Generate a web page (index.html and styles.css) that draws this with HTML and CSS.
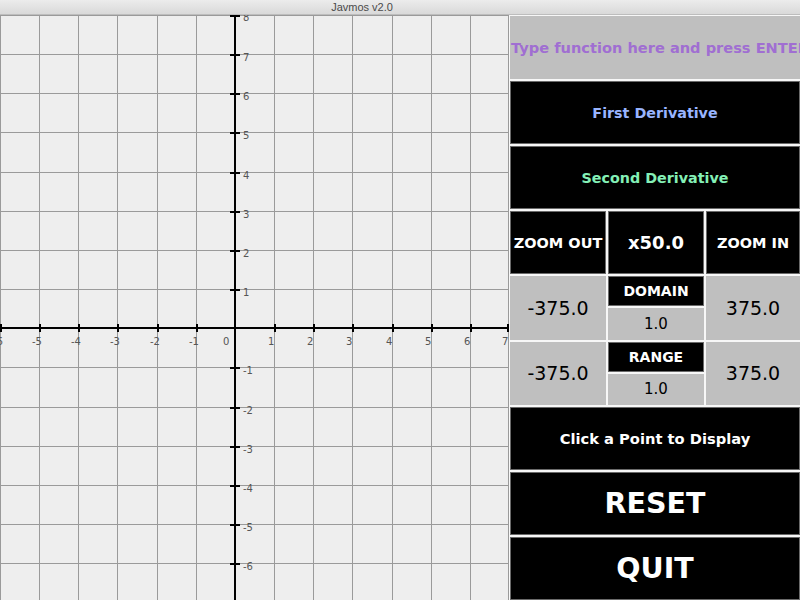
FILE: index.html
```html
<!DOCTYPE html>
<html>
<head>
<meta charset="utf-8">
<title>Javmos v2.0</title>
<link rel="stylesheet" href="styles.css">
</head>
<body>
<div class="window">
  <div class="titlebar"><span class="title">Javmos v2.0</span></div>
  <div class="main">
    <svg class="graph" width="509" height="585" viewBox="0 0 509 585" xmlns="http://www.w3.org/2000/svg">
      <g class="grid">
        <line x1="0.5" y1="0" x2="0.5" y2="585"/>
        <line x1="39.5" y1="0" x2="39.5" y2="585"/>
        <line x1="78.5" y1="0" x2="78.5" y2="585"/>
        <line x1="117.5" y1="0" x2="117.5" y2="585"/>
        <line x1="157.5" y1="0" x2="157.5" y2="585"/>
        <line x1="196.5" y1="0" x2="196.5" y2="585"/>
        <line x1="274.5" y1="0" x2="274.5" y2="585"/>
        <line x1="313.5" y1="0" x2="313.5" y2="585"/>
        <line x1="352.5" y1="0" x2="352.5" y2="585"/>
        <line x1="392.5" y1="0" x2="392.5" y2="585"/>
        <line x1="431.5" y1="0" x2="431.5" y2="585"/>
        <line x1="470.5" y1="0" x2="470.5" y2="585"/>
        <line x1="508.5" y1="0" x2="508.5" y2="585"/>
        <line x1="0" y1="0.5" x2="509" y2="0.5"/>
        <line x1="0" y1="39.5" x2="509" y2="39.5"/>
        <line x1="0" y1="78.5" x2="509" y2="78.5"/>
        <line x1="0" y1="117.5" x2="509" y2="117.5"/>
        <line x1="0" y1="157.5" x2="509" y2="157.5"/>
        <line x1="0" y1="196.5" x2="509" y2="196.5"/>
        <line x1="0" y1="235.5" x2="509" y2="235.5"/>
        <line x1="0" y1="274.5" x2="509" y2="274.5"/>
        <line x1="0" y1="352.5" x2="509" y2="352.5"/>
        <line x1="0" y1="392.5" x2="509" y2="392.5"/>
        <line x1="0" y1="431.5" x2="509" y2="431.5"/>
        <line x1="0" y1="470.5" x2="509" y2="470.5"/>
        <line x1="0" y1="509.5" x2="509" y2="509.5"/>
        <line x1="0" y1="548.5" x2="509" y2="548.5"/>
      </g>
      <g class="axes">
        <rect x="234" y="0" width="2" height="585"/>
        <rect x="0" y="312" width="509" height="2"/>
        <rect x="0" y="309" width="2" height="8"/>
        <rect x="39" y="309" width="2" height="8"/>
        <rect x="78" y="309" width="2" height="8"/>
        <rect x="117" y="309" width="2" height="8"/>
        <rect x="157" y="309" width="2" height="8"/>
        <rect x="196" y="309" width="2" height="8"/>
        <rect x="274" y="309" width="2" height="8"/>
        <rect x="313" y="309" width="2" height="8"/>
        <rect x="352" y="309" width="2" height="8"/>
        <rect x="392" y="309" width="2" height="8"/>
        <rect x="431" y="309" width="2" height="8"/>
        <rect x="470" y="309" width="2" height="8"/>
        <rect x="507" y="309" width="2" height="8"/>
        <rect x="230" y="0" width="10" height="2"/>
        <rect x="230" y="39" width="10" height="2"/>
        <rect x="230" y="78" width="10" height="2"/>
        <rect x="230" y="117" width="10" height="2"/>
        <rect x="230" y="157" width="10" height="2"/>
        <rect x="230" y="196" width="10" height="2"/>
        <rect x="230" y="235" width="10" height="2"/>
        <rect x="230" y="274" width="10" height="2"/>
        <rect x="230" y="352" width="10" height="2"/>
        <rect x="230" y="392" width="10" height="2"/>
        <rect x="230" y="431" width="10" height="2"/>
        <rect x="230" y="470" width="10" height="2"/>
        <rect x="230" y="509" width="10" height="2"/>
        <rect x="230" y="548" width="10" height="2"/>
      </g>
      <g class="labels">
        <text x="-7" y="330">-6</text>
        <text x="32" y="330">-5</text>
        <text x="71" y="330">-4</text>
        <text x="110" y="330">-3</text>
        <text x="150" y="330">-2</text>
        <text x="189" y="330">-1</text>
        <text x="223" y="330">0</text>
        <text x="268" y="330">1</text>
        <text x="307" y="330">2</text>
        <text x="346" y="330">3</text>
        <text x="386" y="330">4</text>
        <text x="425" y="330">5</text>
        <text x="464" y="330">6</text>
        <text x="502" y="330">7</text>
        <text x="243" y="6">8</text>
        <text x="243" y="46">7</text>
        <text x="243" y="85">6</text>
        <text x="243" y="124">5</text>
        <text x="243" y="164">4</text>
        <text x="243" y="203">3</text>
        <text x="243" y="242">2</text>
        <text x="243" y="281">1</text>
        <text x="243" y="359">-1</text>
        <text x="243" y="399">-2</text>
        <text x="243" y="438">-3</text>
        <text x="243" y="477">-4</text>
        <text x="243" y="516">-5</text>
        <text x="243" y="555">-6</text>
      </g>
    </svg>
    <div class="panel">
      <div class="cell input">Type function here and press ENTER</div>
      <div class="cell btn first">First Derivative</div>
      <div class="cell btn second">Second Derivative</div>
      <div class="row3">
        <div class="cell btn zoom">ZOOM OUT</div>
        <div class="cell btn scale">x50.0</div>
        <div class="cell btn zoom">ZOOM IN</div>
      </div>
      <div class="row3">
        <div class="cell value">-375.0</div>
        <div class="stack">
          <div class="cell btn tag">DOMAIN</div>
          <div class="cell value step">1.0</div>
        </div>
        <div class="cell value">375.0</div>
      </div>
      <div class="row3">
        <div class="cell value">-375.0</div>
        <div class="stack">
          <div class="cell btn tag">RANGE</div>
          <div class="cell value step">1.0</div>
        </div>
        <div class="cell value">375.0</div>
      </div>
      <div class="cell btn click">Click a Point to Display</div>
      <div class="cell btn big">RESET</div>
      <div class="cell btn big">QUIT</div>
    </div>
  </div>
</div>
</body>
</html>
```

FILE: styles.css
```css
html, body {
  margin: 0;
  padding: 0;
  width: 800px;
  height: 600px;
  overflow: hidden;
  background: #eeeeee;
}

.window {
  width: 800px;
  height: 600px;
  display: flex;
  flex-direction: column;
}

.titlebar {
  height: 14px;
  border-bottom: 1px solid #bdbdbd;
  background: linear-gradient(#ececec, #d9d9d9);
  text-align: center;
  padding-right: 76px;
  font-family: "Liberation Sans", Arial, sans-serif;
  font-size: 11px;
  line-height: 14px;
  color: #4a4a4a;
}

.main {
  display: flex;
  height: 585px;
}

.graph {
  display: block;
  flex: 0 0 509px;
  background: #eeeeee;
}

.grid line {
  stroke: #9a9a9a;
  stroke-width: 1;
}

.axes rect {
  fill: #000000;
}

.labels text {
  font-family: "DejaVu Sans", sans-serif;
  font-size: 10px;
  fill: #555555;
}

.panel {
  flex: 1;
  display: grid;
  grid-template-rows: repeat(9, 1fr);
  gap: 2px;
  padding: 1px 0 0 1px;
  background: #f7f7f7;
  font-family: "DejaVu Sans", sans-serif;
}

.cell {
  display: flex;
  align-items: center;
  justify-content: center;
  overflow: hidden;
  white-space: nowrap;
  min-height: 0;
}

.input {
  background: #bfbfbf;
  justify-content: flex-start;
  color: #a06ed2;
  font-weight: bold;
  font-size: 14.6px;
  padding-left: 1px;
}

.btn {
  background: #000000;
  border: 1px solid #6a6a6a;
  color: #ffffff;
  font-weight: bold;
}

.first {
  color: #98b4ff;
  font-size: 14.3px;
}

.second {
  color: #84f0b6;
  font-size: 14.3px;
}

.row3 {
  display: grid;
  grid-template-columns: 96px 96px 1fr;
  gap: 2px;
  min-height: 0;
}

.zoom {
  font-size: 14.5px;
}

.scale {
  font-size: 18px;
}

.value {
  background: #bfbfbf;
  color: #000000;
  font-size: 19px;
}

.stack {
  display: grid;
  grid-template-rows: 30px 1fr;
  gap: 2px;
  min-height: 0;
}

.tag {
  font-size: 14px;
}

.step {
  font-size: 15px;
}

.click {
  font-size: 14.7px;
}

.big {
  font-size: 28.5px;
}
```
